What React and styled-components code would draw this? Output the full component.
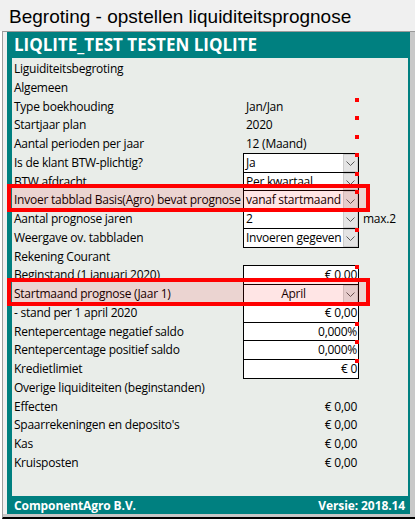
import React from 'react';
import styled, { createGlobalStyle } from 'styled-components';

const Global = createGlobalStyle`
  html, body { margin: 0; padding: 0; background: #ffffff; }
  body { width: 415px; height: 520px; overflow: hidden; }
`;

const Page = styled.div`
  width: 415px;
  height: 520px;
  display: flex;
  flex-direction: column;
  background: #ffffff;
`;

const TitleBar = styled.div`
  height: 28px;
  padding: 3px 0 0 9px;
  background: #f0f0f0;
  font-family: "Liberation Sans", Arial, sans-serif;
  font-size: 19px;
  line-height: 28px;
  color: #000;
  white-space: nowrap;
`;

const Frame = styled.div`
  height: 482px;
  margin-left: 2px;
  border-left: 1px solid #a0a0a0;
  border-top: 1px solid #9a9a9a;
  border-bottom: 2px solid #000;
  background: #c8c8c8;
  padding: 0 5px 3px 0;
  display: flex;
`;

const Sheet = styled.div`
  flex: 1;
  border-left: 4px solid #f0f0f0;
  background: #008080;
  display: flex;
  flex-direction: column;
`;

const Header = styled.div`
  height: 26px;
  padding-left: 7px;
  font-family: "Open Sans", sans-serif;
  font-weight: 700;
  font-size: 17px;
  line-height: 26px;
  color: #fff;
  white-space: nowrap;
`;

const Panel = styled.div`
  flex: 1;
  margin: 0 2px 0 5px;
  padding-top: 2px;
  background: #e9ede9;
  display: flex;
  flex-direction: column;
  font-family: "Open Sans", sans-serif;
  font-size: 12px;
  letter-spacing: -0.25px;
  color: #000;
`;

const Footer = styled.div`
  height: 18px;
  padding: 0 5px 0 7px;
  display: flex;
  justify-content: space-between;
  align-items: center;
  font-family: "Open Sans", sans-serif;
  font-weight: 700;
  font-size: 12px;
  letter-spacing: -0.1px;
  color: #fff;
`;

const Row = styled.div`
  position: relative;
  height: 18.75px;
  display: grid;
  grid-template-columns: 231px 116px 1fr;
  line-height: 18.75px;
`;

const Label = styled.div`
  padding-left: 2px;
  white-space: nowrap;
  overflow: hidden;
`;

const Static = styled.div`
  position: relative;
  padding: 0 2px 0 3px;
  white-space: nowrap;
  text-align: ${(p) => (p.$right ? 'right' : 'left')};
`;

const Box = styled.div`
  position: relative;
  box-sizing: border-box;
  height: calc(100% + 1px);
  margin-top: -1px;
  border: 1px solid #000;
  background: #fff;
  display: flex;
  line-height: 17px;
`;

const BoxText = styled.div`
  flex: 1;
  min-width: 0;
  padding: 0 ${(p) => (p.$align === 'right' ? '1px' : '2px')};
  overflow: hidden;
  white-space: nowrap;
  text-align: ${(p) => p.$align || 'left'};
`;

const DropButton = styled.div`
  width: 15px;
  box-sizing: border-box;
  border: 1px solid #cdcdcd;
  background: #e4e4e4;
  display: flex;
  align-items: center;
  justify-content: center;
  padding-top: 2px;
`;

const Marker = styled.span`
  position: absolute;
  top: ${(p) => (p.$static ? '0' : '-1px')};
  right: ${(p) => (p.$static ? '0' : '-1px')};
  width: 4px;
  height: 4px;
  background: #ff0000;
`;

const Extra = styled.div`
  padding-left: 4px;
  white-space: nowrap;
`;

const Highlight = styled.div`
  position: absolute;
  z-index: 2;
  top: -7px;
  bottom: -2px;
  left: -5px;
  width: 363px;
  box-sizing: border-box;
  border: 4px solid #ff0000;
  background: rgba(255, 0, 0, 0.1);
  pointer-events: none;
`;

const Chevron = () => (
  <svg width="9" height="5" viewBox="0 0 9 5">
    <path d="M0.5 0.5 L4.5 4.5 L8.5 0.5" fill="none" stroke="#5a5a5a" strokeWidth="1" />
  </svg>
);

const rows = [
  { label: 'Liguiditeitsbegroting' },
  { label: 'Algemeen' },
  { label: 'Type boekhouding', kind: 'static', value: 'Jan/Jan', mark: true },
  { label: 'Startjaar plan', kind: 'static', value: '2020', mark: true },
  { label: 'Aantal perioden per jaar', kind: 'static', value: '12 (Maand)', mark: true },
  { label: 'Is de klant BTW-plichtig?', kind: 'select', value: 'Ja', mark: true },
  { label: 'BTW afdracht', kind: 'select', value: 'Per kwartaal', mark: true },
  { label: 'Invoer tabblad Basis(Agro) bevat prognose', kind: 'select', value: 'vanaf startmaand', mark: true, hl: true },
  { label: 'Aantal prognose jaren', kind: 'select', value: '2', extra: 'max.2' },
  { label: 'Weergave ov. tabbladen', kind: 'select', value: 'Invoeren gegeven', mark: true },
  { label: 'Rekening Courant' },
  { label: 'Beginstand (1 januari 2020)', kind: 'input', value: '€ 0,00', mark: true },
  { label: 'Startmaand prognose (Jaar 1)', kind: 'select', value: 'April', align: 'center', hl: true },
  { label: '- stand per 1 april 2020', kind: 'input', value: '€ 0,00' },
  { label: 'Rentepercentage negatief saldo', kind: 'input', value: '0,000%', mark: true },
  { label: 'Rentepercentage positief saldo', kind: 'input', value: '0,000%', mark: true },
  { label: 'Kredietlimiet', kind: 'input', value: '€ 0', mark: true },
  { label: 'Overige liquiditeiten (beginstanden)' },
  { label: 'Effecten', kind: 'amount', value: '€ 0,00' },
  { label: "Spaarrekeningen en deposito's", kind: 'amount', value: '€ 0,00' },
  { label: 'Kas', kind: 'amount', value: '€ 0,00' },
  { label: 'Kruisposten', kind: 'amount', value: '€ 0,00' },
];

function Value({ row }) {
  if (row.kind === 'static') {
    return (
      <Static>
        {row.value}
        {row.mark && <Marker $static />}
      </Static>
    );
  }
  if (row.kind === 'amount') {
    return <Static $right>{row.value}</Static>;
  }
  if (row.kind === 'select') {
    return (
      <Box>
        <BoxText $align={row.align}>{row.value}</BoxText>
        <DropButton>
          <Chevron />
        </DropButton>
        {row.mark && <Marker />}
      </Box>
    );
  }
  if (row.kind === 'input') {
    return (
      <Box>
        <BoxText $align="right">{row.value}</BoxText>
        {row.mark && <Marker />}
      </Box>
    );
  }
  return <div />;
}

export default function App() {
  return (
    <>
      <Global />
      <Page>
        <TitleBar>Begroting - opstellen liquiditeitsprognose</TitleBar>
        <Frame>
          <Sheet>
            <Header>LIQLITE_TEST TESTEN LIQLITE</Header>
            <Panel>
              {rows.map((row, i) => (
                <Row key={i}>
                  <Label>{row.label}</Label>
                  <Value row={row} />
                  <Extra>{row.extra || ''}</Extra>
                  {row.hl && <Highlight />}
                </Row>
              ))}
            </Panel>
            <Footer>
              <span>ComponentAgro B.V.</span>
              <span>Versie: 2018.14</span>
            </Footer>
          </Sheet>
        </Frame>
      </Page>
    </>
  );
}
